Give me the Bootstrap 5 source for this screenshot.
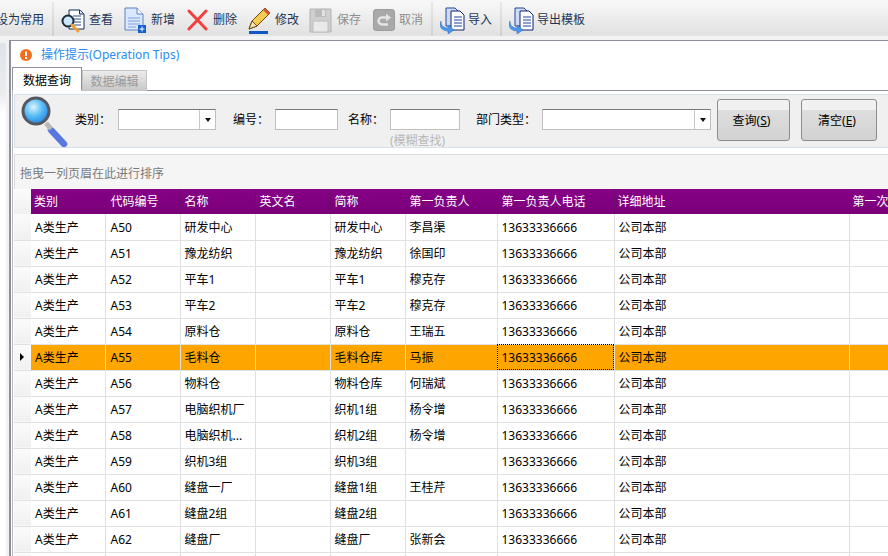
<!DOCTYPE html>
<html lang="zh">
<head>
<meta charset="utf-8">
<title>数据查询</title>
<link href="https://cdn.jsdelivr.net/npm/bootstrap@5.3.0/dist/css/bootstrap.min.css" rel="stylesheet">
<style>
html,body{height:100%;overflow:hidden;}
body{background:#fff;color:#000;font:12px/16px "Noto Sans","Noto Sans CJK SC",sans-serif;}
.tbar{height:38px;background:linear-gradient(#f7f7f7 0,#f6f6f6 5px,#eee 16px,#e1e1e1 35px,#f6f6f6 37px);color:#1d3557;white-space:nowrap;overflow:hidden;}
.tbitem{height:32px;margin-top:4px;flex:none;display:flex;align-items:center;}
.tbitem svg{flex:none;display:block;}
.ti-clip{margin-left:-4px;width:56px;}
.ti-look{margin-left:6px;width:64px;gap:4px;}
.ti-add{width:62px;gap:3px;}
.ti-del{width:62px;gap:4px;}
.ti-edit{width:61px;gap:3px;}
.ti-save{width:64px;gap:4px;}
.ti-undo{width:58px;gap:4px;}
.ti-imp{margin-left:7px;width:60px;gap:3px;}
.ti-exp{margin-left:7px;gap:3px;}
.tbsep{width:2px;height:34px;margin-top:2px;background:linear-gradient(#e8e8e8,#cfcfcf);flex:none;}
.off{color:#8d8d8d;}
.shell{height:518px;background:#f2f2f2;padding-top:2px;}
.lstrip{width:9px;flex:none;padding-top:3px;background:#f2f2f2;}
.lstrip div{width:6px;height:100%;background:linear-gradient(#dfe3ea 0,#e9ebef 50px,#fff 70px);}
.pane{flex:1;min-width:0;border-left:2px solid #8f8f9c;border-top:1px solid #8f8f9c;background:#fff;overflow:hidden;}
.tipsrow{height:26px;color:#2b8cf0;padding-left:9px;gap:9px;padding-top:2px;}
.tipsrow svg{flex:none;}
.tabset{border-bottom:1px solid #8f8f9c;height:24px;margin-left:1px;align-items:flex-end;}
.tabset .nav-link{font-size:12px;line-height:16px;border-radius:0;margin:0;}
.tabset .nav-link.active{height:24px;width:70px;padding:5px 0 0;text-align:center;border:1px solid #8f8f9c;border-bottom:1px solid #fff;color:#000;background:#fff;}
.tabset .nav-link.idle{height:21px;width:65px;padding:3px 0 0;text-align:center;border:1px solid #c4c4c4;background:linear-gradient(#ececec,#c9c9c9);color:#9a9a9a;}
.pagebox{margin-left:1px;border-left:1px solid #b9b9c2;padding:3px 0 0 1px;}
.spanel{height:54px;background:#f0f0f0;border:1px solid #d8e0e8;border-right:0;padding-left:5px;white-space:nowrap;}
.spanel > *{flex:none;}
.glass{margin-right:5px;}
.slabel{margin-top:15px;line-height:20px;}
.sl-kind{width:43px;}
.sl-code{width:42px;margin-left:17px;}
.sl-name{width:42px;margin-left:10px;}
.sl-dept{width:66px;margin-left:16px;}
.fbox{height:21px;background:#fff;border:1px solid #c0c0c0;border-top-color:#777;border-radius:0;padding:0;box-shadow:none;}
.spanel > .fbox{margin-top:14px;}
.fb-kind{width:98px;}
.fb-code{width:63px;}
.fb-dept{width:169px;}
.cmbarrow{width:16px;height:100%;border-left:1px solid #c8c8c8;margin-left:auto;}
.cmbarrow i{border-left:3.5px solid transparent;border-right:3.5px solid transparent;border-top:4px solid #111;}
.hintbox{margin-top:14px;width:70px;}
.hintbox .fbox{width:70px;}
.hinttext{color:#b8b8b8;margin-top:3px;line-height:16px;}
.actbtn{height:42px;margin-top:4px;font-size:12px;line-height:16px;padding:2px 4px 0 0;color:#000;border:1px solid #8d8d8d;border-radius:3px;background:linear-gradient(#f1f1f1 0,#f1f1f1 25%,#dedede 26%,#d2d2d2 100%);}
.ab-q{width:73px;margin-left:6px;}
.ab-c{width:76px;margin-left:11px;}
.gpanel{height:35px;margin-top:6px;background:#f5f5f5;border:1px solid #dcdcdc;border-right:0;border-bottom:0;color:#7a7a7a;padding:11px 0 0 5px;line-height:16px;}
.gridbox{overflow:hidden;}
.gridtbl{table-layout:fixed;width:935px;margin:0;border-collapse:collapse;font-size:12px;line-height:16px;}
.c-rh{width:17px;}.c-74{width:74px;}.c-75{width:75px;}.c-lead{width:92px;}.c-tel{width:117px;}.c-addr{width:235px;}.c-last{width:100px;}
.gridtbl th,.gridtbl td{padding:2px 0 0 3px;border:1px solid #e1e1e1;border-top:0;border-left:0;height:26px;white-space:nowrap;overflow:hidden;vertical-align:middle;background:#fff;color:#000;font-weight:400;box-shadow:none;}
.gridtbl td:nth-child(2){padding-left:4px;}
.gridtbl tr > :nth-child(3){padding-left:5px;}
.gridtbl tr > :nth-child(n+4):nth-child(-n+8),.gridtbl td:nth-child(9){padding-left:4px;}
.gridtbl thead th{height:25px;background:linear-gradient(#860186,#7a007a);color:#fff;padding-top:0;border-right:1px solid #6d0a6d;border-bottom:0;}
.gridtbl thead th.cnr,.gridtbl td.rh{background:linear-gradient(#fbfbfb,#f0f0f0);padding:0;border-right:0;}
.gridtbl tr.picked td:not(.rh){background:#ffa500;}
.gridtbl tr.picked td.cursor{outline:1px dotted #000;outline-offset:-1px;}
.marker{display:block;margin-left:6px;width:0;height:0;border-top:4px solid transparent;border-bottom:4px solid transparent;border-left:4px solid #000;}
</style>
</head>
<body>
<div class="tbar d-flex">
  <div class="tbitem ti-clip"><span>设为常用</span></div>
  <div class="tbsep"></div>
  <div class="tbitem ti-look">
    <svg width="25" height="26" viewBox="0 0 25 26"><path d="M9 3h11l4 4v15H9z" fill="#fff" stroke="#15315f"/><path d="M19.500 3v4h4" fill="#dfe8f5" stroke="#15315f"/><path d="M13 9h8M13 12h8M14 15h7M14 18h7" stroke="#2c4e86"/><circle cx="8" cy="14" r="5.500" fill="#cbe7fb" stroke="#1d2a3a" stroke-width="2"/><path d="M12 18l6 6" stroke="#f0a030" stroke-width="3" stroke-linecap="round"/></svg>
    <span>查看</span></div>
  <div class="tbitem ti-add">
    <svg width="24" height="28" viewBox="0 0 24 28"><path d="M1 2h12l6 6v16H1z" fill="#dbe7fb" stroke="#5d83c8"/><path d="M13 2v6h6" fill="#f4f8ff" stroke="#5d83c8"/><path d="M4 12h12M4 15h12M4 18h12M4 21h8" stroke="#7fa0db"/><rect x="14" y="19" width="8" height="8" fill="#1560c8"/><path d="M18 20.500v5M15.500 23h5" stroke="#fff"/></svg>
    <span>新增</span></div>
  <div class="tbitem ti-del">
    <svg width="23" height="22" viewBox="0 0 23 22"><path d="M3 2l17 18M20 2L3 20" stroke="#f04040" stroke-width="3" stroke-linecap="round"/></svg>
    <span>删除</span></div>
  <div class="tbitem ti-edit">
    <svg width="24" height="28" viewBox="0 0 24 28"><path d="M1 23l3-8L17 2l5 5L9 20z" fill="#f7cb4d" stroke="#6b4a10"/><path d="M17 2l5 5-2 2-5-5z" fill="#d8553b"/><path d="M1 23l3-8 5 5z" fill="#f6e0b5" stroke="#6b4a10"/><rect x="1" y="25" width="19" height="3" fill="#1158c7"/></svg>
    <span>修改</span></div>
  <div class="tbitem ti-save off">
    <svg width="24" height="25" viewBox="0 0 24 25"><path d="M1 1h21v23H1z" fill="#cfcfcf" stroke="#b2b2b2"/><path d="M6 1h11v8H6z" fill="#bbb"/><path d="M13 2h3v6h-3z" fill="#e2e2e2"/><path d="M4 13h15v11H4z" fill="#e9e9e9" stroke="#bdbdbd"/></svg>
    <span>保存</span></div>
  <div class="tbitem ti-undo off">
    <svg width="22" height="22" viewBox="0 0 22 22"><rect x="0.500" y="0.500" width="21" height="21" rx="2.500" fill="#a9a9a9" stroke="#9c9c9c"/><path d="M15 8.500H9a3.500 3.500 0 0 0 0 7h6" fill="none" stroke="#e4e4e4" stroke-width="2.500"/><path d="M13 4.500l5 4-5 4z" fill="#e4e4e4"/></svg>
    <span>取消</span></div>
  <div class="tbsep"></div>
  <div class="tbitem ti-imp">
    <svg width="25" height="28" viewBox="0 0 25 28"><path d="M6 2h9l3 3v15H6z" fill="#cfdcf8" stroke="#2646a0"/><path d="M11 5h9l4 4v15H11z" fill="#fff" stroke="#12226e"/><path d="M14 11h8M14 14h8M14 17h8M14 20h8" stroke="#1c3fa0"/><path d="M1 15c0 5 3 7 7 7v-3l6 5-6 4v-3c-5 0-8-3-8-7z" fill="#4d97ea" stroke="#2a66b8" stroke-width=".5"/></svg>
    <span>导入</span></div>
  <div class="tbsep"></div>
  <div class="tbitem ti-exp">
    <svg width="25" height="28" viewBox="0 0 25 28"><path d="M6 2h9l3 3v15H6z" fill="#cfdcf8" stroke="#2646a0"/><path d="M11 5h9l4 4v15H11z" fill="#fff" stroke="#12226e"/><path d="M14 11h8M14 14h8M14 17h8M14 20h8" stroke="#1c3fa0"/><path d="M1 15c0 5 3 7 7 7v-3l6 5-6 4v-3c-5 0-8-3-8-7z" fill="#4d97ea" stroke="#2a66b8" stroke-width=".5"/></svg>
    <span>导出模板</span></div>
</div>

<div class="shell d-flex">
  <div class="lstrip"><div></div></div>
  <div class="pane">
    <div class="tipsrow d-flex align-items-center">
      <svg width="12" height="12" viewBox="0 0 12 12"><circle cx="6" cy="6" r="6" fill="#f07020"/><rect x="5" y="2.500" width="2" height="4.500" fill="#fff"/><rect x="5" y="8" width="2" height="2" fill="#fff"/></svg>
      <span>操作提示(Operation Tips)</span>
    </div>
    <ul class="nav tabset">
      <li class="nav-item"><a class="nav-link active" href="#">数据查询</a></li>
      <li class="nav-item"><a class="nav-link idle" href="#">数据编辑</a></li>
    </ul>
    <div class="pagebox">
      <div class="spanel d-flex">
        <svg class="glass" width="50" height="52" viewBox="0 0 50 52">
          <defs><radialGradient id="lens" cx=".4" cy=".35" r=".75"><stop offset="0" stop-color="#d8f4ff"/><stop offset=".5" stop-color="#52b8f4"/><stop offset="1" stop-color="#1f78d8"/></radialGradient></defs>
          <path d="M31 35l13 14" stroke="#5a76e0" stroke-width="6.500" stroke-linecap="round"/>
          <path d="M26 28l5 6" stroke="#b9b9b9" stroke-width="5"/>
          <circle cx="16" cy="16" r="13" fill="url(#lens)" stroke="#55585f" stroke-width="3"/>
        </svg>
        <span class="slabel sl-kind">类别：</span>
        <div class="fbox fb-kind d-flex"><span class="cmbarrow d-flex align-items-center justify-content-center"><i></i></span></div>
        <span class="slabel sl-code">编号：</span>
        <input class="form-control fbox fb-code" aria-label="编号">
        <span class="slabel sl-name">名称：</span>
        <div class="hintbox"><input class="form-control fbox" aria-label="名称"><div class="hinttext">(模糊查找)</div></div>
        <span class="slabel sl-dept">部门类型：</span>
        <div class="fbox fb-dept d-flex"><span class="cmbarrow d-flex align-items-center justify-content-center"><i></i></span></div>
        <button class="btn actbtn ab-q">查询(<u>S</u>)</button>
        <button class="btn actbtn ab-c">清空(<u>E</u>)</button>
      </div>
      <div class="gpanel">拖曳一列页眉在此进行排序</div>
      <div class="gridbox">
        <table class="table gridtbl">
          <colgroup><col class="c-rh"><col class="c-74"><col class="c-75"><col class="c-75"><col class="c-75"><col class="c-75"><col class="c-lead"><col class="c-tel"><col class="c-addr"><col class="c-last"></colgroup>
          <thead><tr><th class="cnr"></th><th>类别</th><th>代码编号</th><th>名称</th><th>英文名</th><th>简称</th><th>第一负责人</th><th>第一负责人电话</th><th>详细地址</th><th>第一次</th></tr></thead>
          <tbody>
            <tr><td class="rh"></td><td>A类生产</td><td>A50</td><td>研发中心</td><td></td><td>研发中心</td><td>李昌渠</td><td>13633336666</td><td>公司本部</td><td></td></tr>
            <tr><td class="rh"></td><td>A类生产</td><td>A51</td><td>豫龙纺织</td><td></td><td>豫龙纺织</td><td>徐国印</td><td>13633336666</td><td>公司本部</td><td></td></tr>
            <tr><td class="rh"></td><td>A类生产</td><td>A52</td><td>平车1</td><td></td><td>平车1</td><td>穆克存</td><td>13633336666</td><td>公司本部</td><td></td></tr>
            <tr><td class="rh"></td><td>A类生产</td><td>A53</td><td>平车2</td><td></td><td>平车2</td><td>穆克存</td><td>13633336666</td><td>公司本部</td><td></td></tr>
            <tr><td class="rh"></td><td>A类生产</td><td>A54</td><td>原料仓</td><td></td><td>原料仓</td><td>王瑞五</td><td>13633336666</td><td>公司本部</td><td></td></tr>
            <tr class="picked"><td class="rh"><span class="marker"></span></td><td>A类生产</td><td>A55</td><td>毛料仓</td><td></td><td>毛料仓库</td><td>马振</td><td class="cursor">13633336666</td><td>公司本部</td><td></td></tr>
            <tr><td class="rh"></td><td>A类生产</td><td>A56</td><td>物料仓</td><td></td><td>物料仓库</td><td>何瑞斌</td><td>13633336666</td><td>公司本部</td><td></td></tr>
            <tr><td class="rh"></td><td>A类生产</td><td>A57</td><td>电脑织机厂</td><td></td><td>织机1组</td><td>杨令增</td><td>13633336666</td><td>公司本部</td><td></td></tr>
            <tr><td class="rh"></td><td>A类生产</td><td>A58</td><td>电脑织机...</td><td></td><td>织机2组</td><td>杨令增</td><td>13633336666</td><td>公司本部</td><td></td></tr>
            <tr><td class="rh"></td><td>A类生产</td><td>A59</td><td>织机3组</td><td></td><td>织机3组</td><td></td><td>13633336666</td><td>公司本部</td><td></td></tr>
            <tr><td class="rh"></td><td>A类生产</td><td>A60</td><td>缝盘一厂</td><td></td><td>缝盘1组</td><td>王桂芹</td><td>13633336666</td><td>公司本部</td><td></td></tr>
            <tr><td class="rh"></td><td>A类生产</td><td>A61</td><td>缝盘2组</td><td></td><td>缝盘2组</td><td></td><td>13633336666</td><td>公司本部</td><td></td></tr>
            <tr><td class="rh"></td><td>A类生产</td><td>A62</td><td>缝盘厂</td><td></td><td>缝盘厂</td><td>张新会</td><td>13633336666</td><td>公司本部</td><td></td></tr>
            <tr><td class="rh"></td><td></td><td></td><td></td><td></td><td></td><td></td><td></td><td></td><td></td></tr>
          </tbody>
        </table>
      </div>
    </div>
  </div>
</div>
<script src="https://cdn.jsdelivr.net/npm/bootstrap@5.3.0/dist/js/bootstrap.bundle.min.js"></script>
</body>
</html>
